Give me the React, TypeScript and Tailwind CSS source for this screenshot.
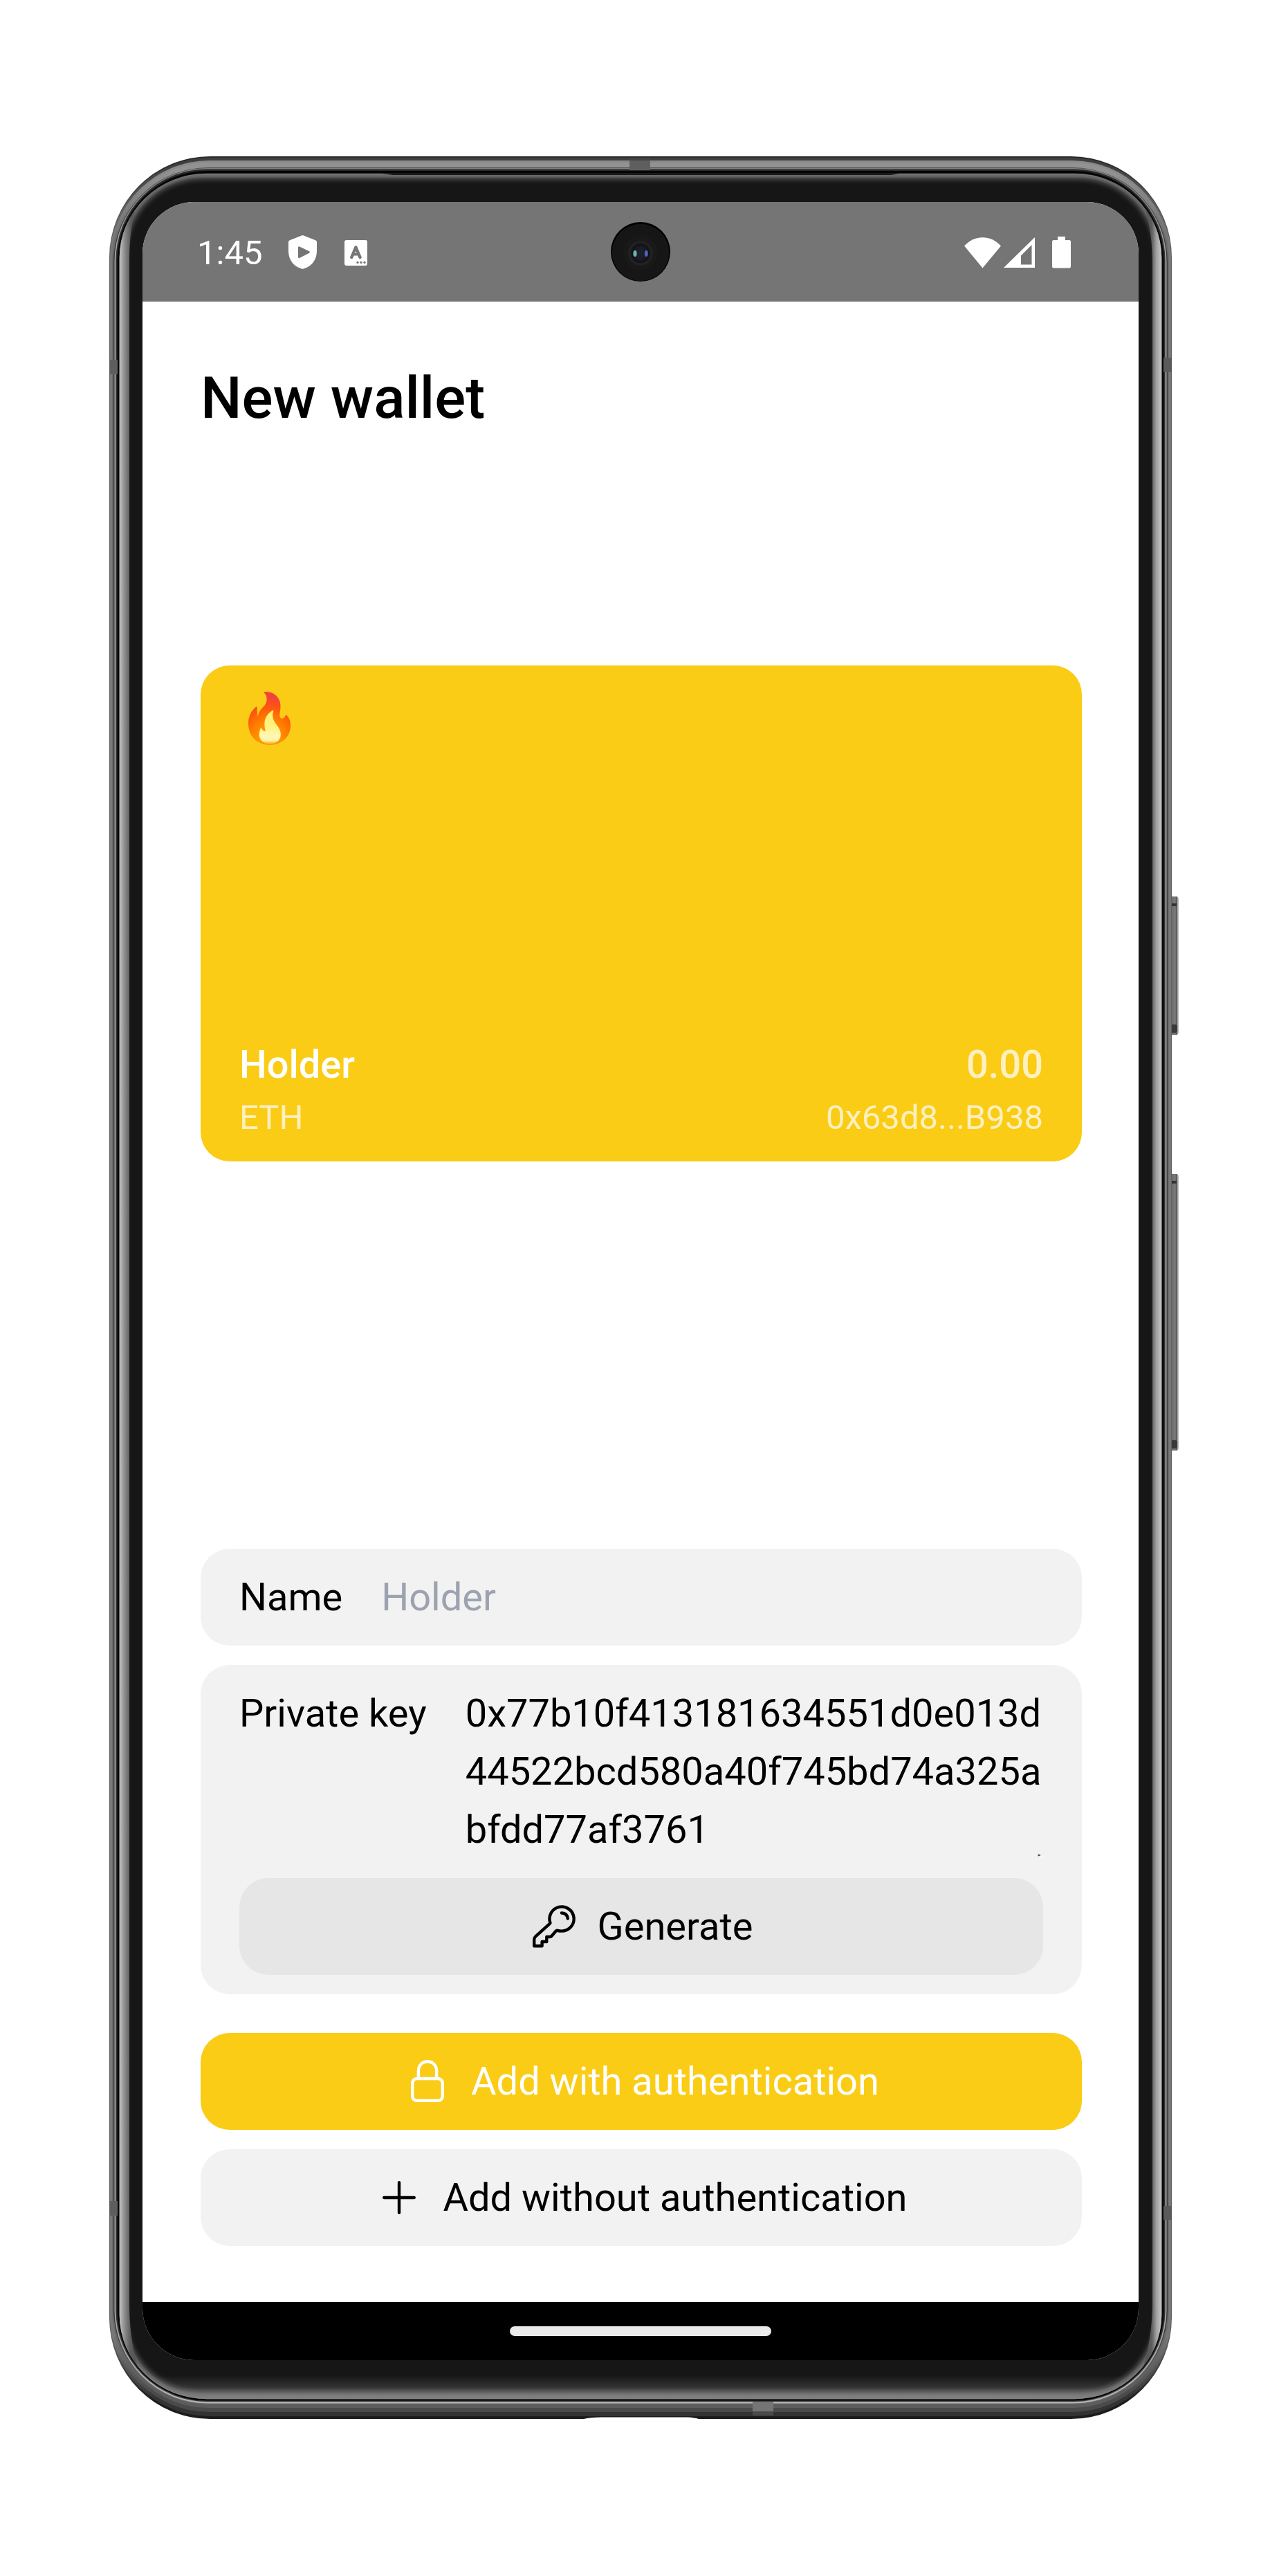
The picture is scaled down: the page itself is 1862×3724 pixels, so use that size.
import React from "react";

type Layer = { s: number; t: number; b: number; r: number; top: string; side: string; bottom: string };

const W = 1536;
const H = 3271;

const metal: Layer[] = [
  { s: 0, t: 0, b: 0, r: 146, top: "#2a2a2a", side: "#606060", bottom: "#1c1c1c" },
  { s: 1, t: 2, b: 4, r: 144, top: "#3f3f3f", side: "#787878", bottom: "#333333" },
  { s: 2.5, t: 6, b: 10, r: 142, top: "#8a8a8a", side: "#787878", bottom: "#4a4a4a" },
  { s: 4, t: 9, b: 16, r: 140, top: "#929292", side: "#6c6c6c", bottom: "#5c5c5c" },
  { s: 6, t: 16, b: 21, r: 137, top: "#555555", side: "#3a3a3a", bottom: "#666666" },
  { s: 7.5, t: 17, b: 22.5, r: 135, top: "#808080", side: "#a0a0a0", bottom: "#b0b0b0" },
  { s: 9.5, t: 18.5, b: 25, r: 132, top: "#2a2a2a", side: "#2e2e2e", bottom: "#3a3a3a" },
  { s: 11.5, t: 21, b: 26.5, r: 130, top: "#050505", side: "#080808", bottom: "#000000" },
];

function DeviceFrame() {
  return (
    <svg className="pointer-events-none absolute inset-0 overflow-visible" width={W} height={H} viewBox={`0 0 ${W} ${H}`}>
      <defs>
        {metal.map((m, i) => (
          <linearGradient key={i} id={`metal${i}`} x1="0" y1="0" x2="0" y2="1">
            <stop offset="0.004" stopColor={m.top} />
            <stop offset="0.035" stopColor={m.side} />
            <stop offset="0.965" stopColor={m.side} />
            <stop offset="0.992" stopColor={m.bottom} />
          </linearGradient>
        ))}
        <linearGradient id="edgeL" x1="0" x2="1" y1="0" y2="0">
          <stop offset="0" stopColor="#c8c8c8" />
          <stop offset="0.25" stopColor="#8c8c8c" />
          <stop offset="0.5" stopColor="#5c5c5c" />
          <stop offset="1" stopColor="#4c4c4c" />
        </linearGradient>
        <linearGradient id="edgeR" x1="1" x2="0" y1="0" y2="0">
          <stop offset="0" stopColor="#cccccc" />
          <stop offset="0.25" stopColor="#a0a0a0" />
          <stop offset="0.45" stopColor="#5c5c5c" />
          <stop offset="1" stopColor="#4c4c4c" />
        </linearGradient>
        <linearGradient id="chin" x1="0" x2="0" y1="0" y2="1">
          <stop offset="0" stopColor="#808080" stopOpacity="0" />
          <stop offset="0.5" stopColor="#808080" stopOpacity="0.28" />
          <stop offset="1" stopColor="#808080" stopOpacity="1" />
        </linearGradient>
        <linearGradient id="button" x1="0" x2="1" y1="0" y2="0">
          <stop offset="0" stopColor="#5c5c5c" />
          <stop offset="0.2" stopColor="#8a8a8a" />
          <stop offset="0.3" stopColor="#6c6c6c" />
          <stop offset="0.65" stopColor="#7c7c7c" />
          <stop offset="0.78" stopColor="#4c4c4c" />
          <stop offset="0.88" stopColor="#a4a4a4" />
          <stop offset="1" stopColor="#c8c8c8" />
        </linearGradient>
        <clipPath id="glass">
          <rect x="14.7" y="24.7" width={W - 29.4} height={H - 53.5} rx="126" ry="122" />
        </clipPath>
        <filter id="soft" x="-5%" y="-5%" width="110%" height="110%">
          <feGaussianBlur stdDeviation="4.5" />
        </filter>
      </defs>

      {[1070, 1471].map((y, i) => (
        <g key={y}>
          <rect x="1532" y={y} width="14" height={i ? 400 : 200} rx="4" fill="url(#button)" />
          <rect x="1536" y={y + 10} width="7" height="4" fill="#333333" />
          <rect x="1535" y={y + (i ? 385 : 185)} width="9" height="12" rx="3" fill="#3a3a3a" />
        </g>
      ))}

      {metal.map((m, i) => (
        <rect key={i} x={m.s} y={m.t} width={W - 2 * m.s} height={H - m.t - m.b} rx={m.r} ry={m.r} fill={`url(#metal${i})`} />
      ))}

      <rect x="752" y="2" width="30" height="18" fill="#5f5f5f" />
      <rect x="752" y="2" width="30" height="4" fill="#444444" />
      <rect x="930" y="3246" width="30" height="14" fill="#757575" />
      <rect x="930" y="3260" width="30" height="6" fill="#4a4a4a" />
      <rect x="0" y="294" width="12" height="21" fill="#5e5e5e" />
      <rect x="1524" y="291" width="12" height="21" fill="#5a5a5a" />
      <rect x="0" y="2956" width="12" height="21" fill="#5e5e5e" />
      <rect x="1524" y="2963" width="12" height="20" fill="#5a5a5a" />

      <g clipPath="url(#glass)">
        <rect x="0" y="0" width={W} height={H} fill="#848484" />
        <rect x="22" y="31" width={W - 44} height={H - 68} rx="112" fill="#141414" filter="url(#soft)" />
        <rect x="20" y="3208" width={W - 40} height="35" fill="url(#chin)" />
        <path d="M14 62L43 60Q29 96 29 150V3110Q30 3170 47 3212L14 3200Z" fill="url(#edgeL)" />
        <path d="M1522 62L1492 60Q1507 96 1508 150V3110Q1506 3170 1489 3212L1522 3200Z" fill="url(#edgeR)" />
      </g>
      <path d="M391 24.5H1145L1130 27H410Z" fill="#161616" />
      <path d="M686 3271Q694 3268.5 712 3268.5H836Q846 3269 852 3271V3273H686Z" fill="#ffffff" />
    </svg>
  );
}

function Camera() {
  return (
    <svg className="absolute top-[29px] left-[677px]" width="86" height="86" viewBox="0 0 86 86">
      <defs>
        <radialGradient id="lens">
          <stop offset="0" stopColor="#1b2230" />
          <stop offset="0.55" stopColor="#181b22" />
          <stop offset="0.62" stopColor="#101010" />
          <stop offset="0.85" stopColor="#242424" />
          <stop offset="1" stopColor="#181818" />
        </radialGradient>
      </defs>
      <circle cx="43" cy="43" r="43" fill="#000000" />
      <circle cx="43" cy="44" r="41.2" fill="#161616" />
      <circle cx="43" cy="44" r="25" fill="#191919" />
      <circle cx="43" cy="45" r="19" fill="url(#lens)" />
      <ellipse cx="35" cy="45.5" rx="2.6" ry="4.6" fill="#6fb3ae" />
      <ellipse cx="51.3" cy="45.5" rx="2.4" ry="4.6" fill="#5064c0" />
    </svg>
  );
}

function StatusBar() {
  return (
    <div className="relative h-36 shrink-0 bg-[#757575] text-white">
      <div className="flex h-[146px] items-center pr-[98px] pl-[79px]">
        <span className="w-[132px] text-[49px] leading-none">1:45</span>
        <svg width="41" height="49" viewBox="0 0 41 49" className="mb-[1px]">
          <path
            fill="#fff"
            fillRule="evenodd"
            d="M20.5 0 39 7.2Q41 8 41 10V23C41 37 32 46 20.5 49C9 46 0 37 0 23V10Q0 8 2 7.2ZM16 16.6Q14 15.600 14 18V31.500Q14 34 16 33L30 25.800Q32 24.500 30 23.300Z"
          />
        </svg>
        <svg width="33" height="37" viewBox="0 0 33 37" className="ml-10">
          <rect width="33" height="37" rx="3" fill="#fff" />
          <g fill="none" stroke="#757575" strokeLinecap="round" strokeLinejoin="round">
            <path d="M10.300 25 16.400 10.500 22.500 25" strokeWidth="4.500" />
            <path d="M13 20.700H20" strokeWidth="3.600" />
          </g>
          <g fill="#757575">
            <circle cx="19" cy="32.400" r="1.700" />
            <circle cx="24" cy="32.400" r="1.700" />
            <circle cx="29" cy="32.400" r="1.700" />
          </g>
        </svg>
        <svg width="53" height="45" viewBox="0 0 53 45" className="ml-auto">
          <path d="M0 12.500C15-4 38-4 53 12.500L26.500 44.500Z" fill="#fff" />
        </svg>
        <svg width="45" height="44" viewBox="0 0 45 44" className="ml-1">
          <path d="M45 0V44H0ZM40.500 11 25 26.500V39.500H40.500Z" fill="#fff" fillRule="evenodd" />
        </svg>
        <svg width="27" height="46" viewBox="0 0 27 46" className="ml-[25px]">
          <path d="M8 0H19V5H24.500Q27 5 27 7.500V43Q27 45.500 24.500 45.500H2.500Q0 45.500 0 43V7.500Q0 5 2.500 5H8Z" fill="#fff" />
        </svg>
      </div>
      <Camera />
    </div>
  );
}

function Flame() {
  return (
    <svg width="61" height="77" viewBox="0 0 61 77" className="mt-[10px] ml-[13px]">
      <defs>
        <radialGradient id="fireOuter" gradientUnits="userSpaceOnUse" cx="30" cy="74" r="74" gradientTransform="translate(30 0) scale(0.8 1) translate(-30 0)">
          <stop offset="0.25" stopColor="#ff9800" />
          <stop offset="0.5" stopColor="#ff7a00" />
          <stop offset="0.68" stopColor="#ff5a0a" />
          <stop offset="0.88" stopColor="#f44336" />
        </radialGradient>
        <linearGradient id="fireInner" x1="0" y1="0" x2="0" y2="1">
          <stop offset="0" stopColor="#fff176" />
          <stop offset="0.45" stopColor="#fff27e" />
          <stop offset="0.78" stopColor="#fff7b8" />
          <stop offset="0.9" stopColor="#fff3a0" />
          <stop offset="1" stopColor="#ffa820" />
        </linearGradient>
      </defs>
      <path
        fill="url(#fireOuter)"
        d="M22.500 1C22 .2 23 0 25 0C38 0 47 9 46.500 22C46.300 28 45 31 45.300 35C45.600 39.500 51 40.500 53 35.500C54 33.500 55 33.500 56 34.500C59.500 38.500 61 43 61 49C61 65 48 77 31.500 77C13 77 0 64 0 46C0 36 4 28 10.500 22.300C12 21 12.800 21.600 12.800 23.500C12.600 28 12.800 32 13.800 36C16 24 24 22 26 15C27.500 10 26.500 5 22.500 1Z"
      />
      <path
        fill="url(#fireInner)"
        d="M36.500 27C34 35 35.500 40 39.500 46C43.500 51 46.800 55 46.800 62C46.800 70 40 75.500 31.500 75.500C22 75.500 15.800 70 15.800 62C15.800 58 17 54 18.500 51.300C19.500 55 21.500 57 24.800 57.300C24.500 54 23 51 23.400 45C24 36 29.500 30 35.500 27Z"
      />
    </svg>
  );
}

function KeyIcon() {
  return (
    <svg width="70" height="70" viewBox="-4 -4 70 70" fill="none" stroke="currentColor" strokeWidth="4.400" strokeLinecap="round" strokeLinejoin="round">
      <path d="M25.500 26A17.600 17.600 0 1 1 42 37.600Q38.500 37.600 36 36.800Q34.500 36.500 33.500 37.800L27.500 44.800Q26.500 46 25 46H20.300V53H13.600V59.200H2.200V50Q2.200 47.500 4 45.700L24 27.700Q25.500 26.200 25.500 26Z" />
      <path d="M42 11.500Q50 12 50.800 19.500" />
    </svg>
  );
}

function LockIcon() {
  return (
    <svg width="70" height="70" viewBox="0 0 70 70" fill="none" stroke="currentColor" strokeWidth="4.400">
      <rect x="13.200" y="31" width="43.600" height="31.800" rx="6.500" />
      <path d="M21.900 31V19.300A13.100 13.100 0 0 1 48.100 19.300V31" />
    </svg>
  );
}

function PlusIcon() {
  return (
    <svg width="70" height="70" viewBox="0 0 512 512" fill="none" stroke="currentColor" strokeWidth="32" strokeLinecap="round">
      <path d="M256 97V415M415 256H97" />
    </svg>
  );
}

function WalletCard() {
  return (
    <div className="flex h-[717px] flex-col justify-between rounded-[42px] bg-[#facc15] px-14 py-7 text-white">
      <Flame />
      <div>
        <div className="flex justify-between leading-[84px] font-medium">
          <span>Holder</span>
          <span className="text-[#fef0c0]">0.00</span>
        </div>
        <div className="flex justify-between text-[49px] leading-[70px] text-[#fef0c0]">
          <span>ETH</span>
          <span>0x63d8...B938</span>
        </div>
      </div>
    </div>
  );
}

function Button({ icon, label, className }: { icon: React.ReactNode; label: string; className: string }) {
  return (
    <button className={`flex h-[140px] w-full items-center justify-center gap-7 rounded-[42px] leading-[84px] ${className}`}>
      {icon}
      <span>{label}</span>
    </button>
  );
}

const keyLines = ["0x77b10f413181634551d0e013d", "44522bcd580a40f745bd74a325a", "bfdd77af3761"];

export default function App() {
  return (
    <div className="h-[3724px] w-[1862px] overflow-hidden bg-white pt-[226px] pl-[158px] font-['Roboto',sans-serif] text-[56px] text-black">
      <div className="relative h-[3271px] w-[1536px] px-12 pt-[66px]">
        <DeviceFrame />
        <div className="relative flex h-[3120px] w-[1440px] flex-col overflow-hidden rounded-[75px] bg-white">
          <StatusBar />
          <main className="flex grow flex-col pt-[84px] pr-[82px] pl-[84px]">
            <h1 className="text-[84px] leading-[112px] font-medium">New wallet</h1>
            <div className="mt-[330px]">
              <WalletCard />
            </div>
            <div className="mt-[560px] flex h-[140px] items-center gap-14 rounded-[42px] bg-[#f2f2f2] px-14 leading-[84px]">
              <span>Name</span>
              <span className="text-[#9ca3af]">Holder</span>
            </div>
            <div className="mt-7 rounded-[42px] bg-[#f2f2f2] px-14 py-7 leading-[84px]">
              <div className="relative flex h-[280px] gap-14">
                <span>Private key</span>
                <div>
                  {keyLines.map((l) => (
                    <div key={l} className="whitespace-nowrap">{l}</div>
                  ))}
                </div>
                <svg className="absolute right-0 bottom-[28px]" width="9" height="8" viewBox="0 0 9 8">
                  <path d="M1 3L3 1V2H5V4H3V5Z" fill="#555" />
                  <path d="M4 7L9 5V7Z" fill="#fff" />
                </svg>
              </div>
              <Button icon={<KeyIcon />} label="Generate" className="bg-[#e6e6e6]" />
            </div>
            <div className="mt-14 flex flex-col gap-7">
              <Button icon={<LockIcon />} label="Add with authentication" className="bg-[#facc15] text-white" />
              <Button icon={<PlusIcon />} label="Add without authentication" className="bg-[#f2f2f2]" />
            </div>
          </main>
          <div className="flex h-[84px] shrink-0 justify-center bg-black pt-[35px]">
            <div className="h-[14px] w-[378px] rounded-full bg-[#ebebeb]" />
          </div>
        </div>
      </div>
    </div>
  );
}
